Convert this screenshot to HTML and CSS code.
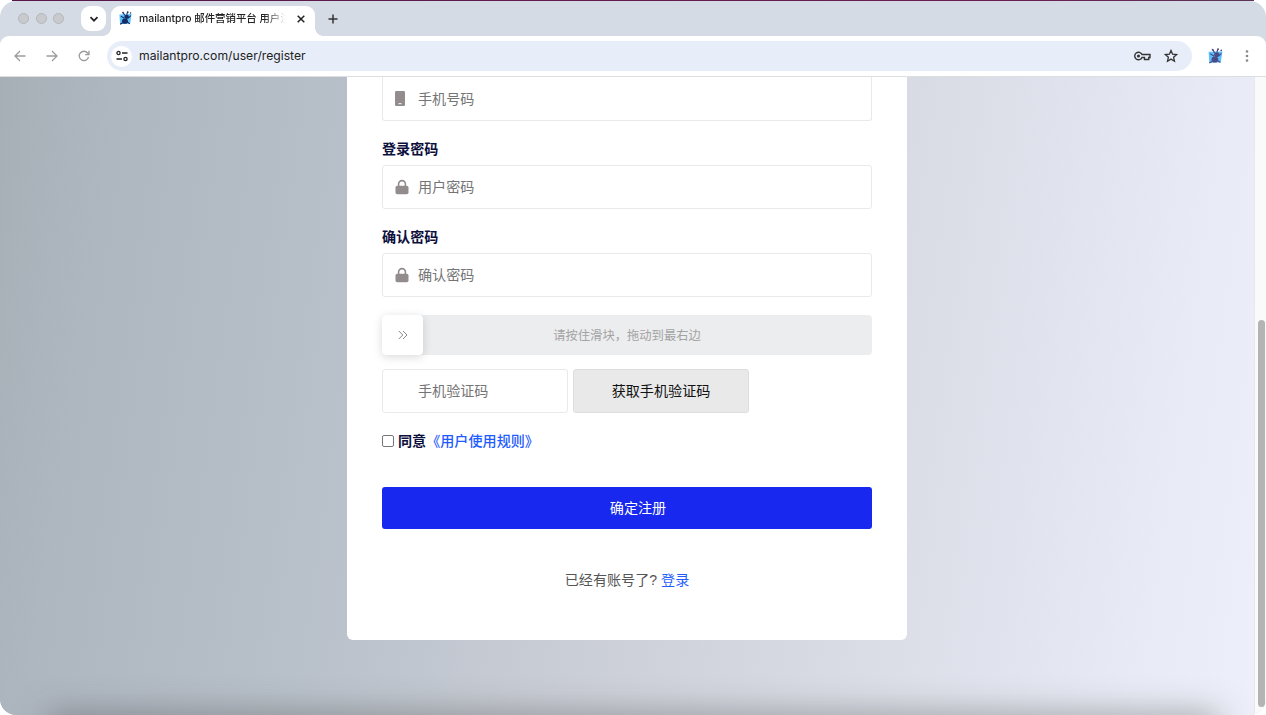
FILE: index.html
```
<!DOCTYPE html>
<html lang="zh-CN">
<head>
  <meta charset="UTF-8">
  <meta name="viewport" content="width=device-width, initial-scale=1.0">
  <title>mailantpro 邮件营销平台 用户注册</title>
  <link rel="stylesheet" href="styles.css">
</head>
<body>
  <svg width="0" height="0" class="sprite">
    <symbol id="ant" viewBox="0 0 16 16">
      <path d="M1.500 3.600 14.500 3.200l-1.500 10.200L2.200 14z" fill="#5cc0fa"/>
      <path d="M5.600 1.800l1.600 2.800M10.200 1l-.9 3M3 5.500l3.800 2.200M11 7.500l2.600-2.500M5 12.500l-2.800 1.700M10 12l2.600 1.600" fill="none" stroke="currentColor" stroke-width="1.100"/>
      <circle cx="5.300" cy="1.700" r=".9" fill="currentColor"/>
      <circle cx="10.400" cy="1.200" r=".9" fill="currentColor"/>
      <circle cx="13.400" cy="2.200" r=".8" fill="currentColor"/>
      <ellipse cx="9.200" cy="6.300" rx="2.500" ry="2.300" fill="currentColor"/>
      <ellipse cx="7.400" cy="10.800" rx="3.200" ry="2.900" fill="currentColor"/>
    </symbol>
    <symbol id="lock" viewBox="0 0 14 16">
      <rect x="0.5" y="6.800" width="13" height="8.400" rx="1.800" fill="#938c8c"/>
      <path d="M3.600 7.500V5a3.400 3.400 0 0 1 6.800 0v2.500" fill="none" stroke="#938c8c" stroke-width="1.600"/>
    </symbol>
  </svg>

  <div class="window">
    <!-- tab strip -->
    <div class="tabs">
      <div class="lights"><i></i><i></i><i></i></div>
      <div class="tab-search">
        <svg width="10" height="10" viewBox="0 0 10 10"><path d="M1.500 3.200 5 6.700l3.500-3.500" fill="none" stroke="#222" stroke-width="1.700"/></svg>
      </div>
      <div class="tab">
        <svg class="favicon" width="15" height="15"><use href="#ant"/></svg>
        <span class="tab-title">mailantpro 邮件营销平台 用户注册</span>
        <svg width="10" height="10" viewBox="0 0 10 10"><path d="M1.700 1.700l6.600 6.600M8.300 1.700l-6.600 6.600" stroke="#222" stroke-width="1.500"/></svg>
      </div>
      <svg class="new-tab" width="10" height="10" viewBox="0 0 10 10"><path d="M5 .5v9M.5 5h9" stroke="#333" stroke-width="1.500"/></svg>
    </div>

    <!-- address bar -->
    <div class="toolbar">
      <div class="nav">
        <svg width="12" height="12" viewBox="0 0 12 12"><path d="M11.500 6H1.300M6 1 1 6l5 5" fill="none" stroke="#9c9c9c" stroke-width="1.300"/></svg>
        <svg width="12" height="12" viewBox="0 0 12 12"><path d="M.5 6h10.200M6 1l5 5-5 5" fill="none" stroke="#9c9c9c" stroke-width="1.300"/></svg>
        <svg width="12" height="12" viewBox="0 0 12 12"><path d="M10.500 7A4.700 4.700 0 1 1 9.600 3L11 4.500M11 .8v3.900H7.100" fill="none" stroke="#9c9c9c" stroke-width="1.300"/></svg>
      </div>
      <div class="omnibox">
        <div class="site-info">
          <svg width="12" height="12" viewBox="0 0 12 12" fill="none" stroke="#222" stroke-width="1.300"><circle cx="2.500" cy="3" r="1.600"/><path d="M6 3h5.500M.5 9h5.500"/><circle cx="9.500" cy="9" r="1.600"/></svg>
        </div>
        <span class="url">mailantpro.com/user/register</span>
        <svg class="key" width="17" height="10" viewBox="0 0 17 10"><path d="M8 3.500A3.800 3.800 0 1 0 8 6.500h2.500V8.500h4.200V6.500h1.300V3.500z" fill="none" stroke="#333" stroke-width="1.400"/><circle cx="4.500" cy="5" r="1.600" fill="#333"/></svg>
        <svg class="star" width="14" height="14" viewBox="0 0 14 14"><path d="M7 1.500l1.600 3.700 4 .4-3 2.700.9 3.900L7 10.100l-3.500 2.100.9-3.900-3-2.700 4-.4z" fill="none" stroke="#333" stroke-width="1.300"/></svg>
      </div>
      <svg class="ext" width="17" height="17"><use href="#ant"/></svg>
      <svg class="menu" width="4" height="14" viewBox="0 0 4 14" fill="#888"><circle cx="2" cy="2.500" r="1.300"/><circle cx="2" cy="7" r="1.300"/><circle cx="2" cy="11.500" r="1.300"/></svg>
    </div>

    <div class="viewport">
      <div class="page">
        <form class="card">
          <div class="field first">
            <svg width="10" height="15" viewBox="0 0 10 15"><rect width="10" height="15" rx="1.300" fill="#938c8c"/><path d="M3.500 12.700h3" stroke="#fff" stroke-width="1"/></svg>
            <input type="text" placeholder="手机号码">
          </div>
          <label class="label">登录密码</label>
          <div class="field">
            <svg width="14" height="16"><use href="#lock"/></svg>
            <input type="password" placeholder="用户密码">
          </div>
          <label class="label">确认密码</label>
          <div class="field">
            <svg width="14" height="16"><use href="#lock"/></svg>
            <input type="password" placeholder="确认密码">
          </div>
          <div class="slider">
            <div class="slider-btn">
              <svg width="10" height="10" viewBox="0 0 10 10"><path d="M.8 1l4 4-4 4M5 1l4 4-4 4" fill="none" stroke="#888" stroke-width="1"/></svg>
            </div>
            <span class="slider-text">请按住滑块，拖动到最右边</span>
          </div>
          <div class="code-row">
            <div class="field code"><input type="text" placeholder="手机验证码"></div>
            <button type="button" class="code-btn">获取手机验证码</button>
          </div>
          <div class="agree">
            <input type="checkbox">
            <span>同意<a href="#">《用户使用规则》</a></span>
          </div>
          <button type="button" class="submit">确定注册</button>
          <p class="login">已经有账号了? <a href="#">登录</a></p>
        </form>
      </div>
      <div class="scrollbar"><div class="thumb"></div></div>
      <div class="shade"></div>
    </div>
  </div>
</body>
</html>
```

FILE: styles.css
```
* {
  box-sizing: border-box;
}

body {
  margin: 0;
  height: 715px;
  padding-top: 1px;
  overflow: hidden;
  background: linear-gradient(to right, #fff 12px, #56184a 12px, #6b1d51 1000px, #5c3558 1254px, #fff 1254px) top / 100% 1px no-repeat #fff;
  font-family: "Liberation Sans", "Noto Sans CJK SC", sans-serif;
  font-size: 14.1px;
}

svg {
  display: block;
  flex-shrink: 0;
}

.sprite {
  position: absolute;
}

a {
  color: #1f5cff;
  text-decoration: none;
}

.window {
  display: flex;
  flex-direction: column;
  height: 714px;
  border-radius: 16px;
  overflow: hidden;
  background: #d5dbe4;
}

/* tab strip */
.tabs {
  display: flex;
  align-items: center;
  height: 35px;
  padding-left: 18px;
}

.lights {
  display: flex;
  gap: 6.5px;
}

.lights i {
  width: 11px;
  height: 11px;
  border-radius: 50%;
  background: #c8cacd;
  border: 1px solid #b4b6b9;
}

.tab-search {
  display: flex;
  align-items: center;
  justify-content: center;
  width: 25px;
  height: 25px;
  margin-left: 17px;
  border-radius: 9px;
  background: #fff;
}

.tab {
  position: relative;
  display: flex;
  align-items: center;
  align-self: flex-end;
  width: 204px;
  height: 30px;
  margin-left: 5px;
  padding: 0 9px 5px 7px;
  border-radius: 9px 9px 0 0;
  background: #fff;
}

.tab::before,
.tab::after {
  content: "";
  position: absolute;
  bottom: 0;
  width: 8px;
  height: 8px;
}

.tab::before {
  left: -8px;
  background: radial-gradient(circle at 0 0, transparent 7.5px, #fff 8px);
}

.tab::after {
  right: -8px;
  background: radial-gradient(circle at 100% 0, transparent 7.5px, #fff 8px);
}

.favicon {
  color: #162a63;
}

.tab-title {
  width: 147px;
  margin: 0 10px 0 6px;
  overflow: hidden;
  white-space: nowrap;
  font: 500 10.4px/16px Inter, "Noto Sans CJK SC", sans-serif;
  color: #222;
  -webkit-mask-image: linear-gradient(to right, #000 125px, transparent 147px);
  mask-image: linear-gradient(to right, #000 125px, transparent 147px);
}

.new-tab {
  margin-left: 13px;
}

/* address bar */
.toolbar {
  display: flex;
  align-items: center;
  height: 41px;
  padding: 0 17px 0 14px;
  background: #fff;
  border-bottom: 1px solid #dcdfe2;
  border-radius: 9px 9px 0 0;
}

.nav {
  display: flex;
  gap: 20px;
}

.omnibox {
  display: flex;
  align-items: center;
  width: 1085px;
  height: 30px;
  margin-left: 17px;
  padding: 0 14px 0 4px;
  border-radius: 15px;
  background: #e8eef9;
}

.site-info {
  display: flex;
  align-items: center;
  justify-content: center;
  width: 21px;
  height: 21px;
  border-radius: 50%;
  background: #fff;
}

.url {
  flex: 1;
  margin-left: 7px;
  font: 12.2px/18px Inter, sans-serif;
  color: #222;
}

.star {
  margin-left: 13px;
}

.ext {
  margin-left: 15px;
  color: #4a4c87;
}

.menu {
  margin-left: auto;
}

/* page */
.viewport {
  position: relative;
  display: flex;
  flex: 1;
  min-height: 0;
}

.page {
  flex: 1;
  overflow: hidden;
  background: linear-gradient(98deg, #a7afb6 0%, #aeb6c0 9%, #b8c0c9 28%, #c8ccd5 46%, #dadde6 71%, #e8ebf5 91%, #edf0fa 100%);
}

.card {
  width: 560px;
  height: 563px;
  margin: 0 auto;
  padding: 0 35px;
  border-radius: 0 0 6px 6px;
  background: #fff;
}

.field {
  display: flex;
  align-items: center;
  height: 44px;
  padding-left: 12px;
  border: 1px solid #e9e9ea;
  border-radius: 3px;
}

.field.first {
  height: 44px;
  border-top: 0;
  border-radius: 0 0 3px 3px;
}

.field input {
  flex: 1;
  min-width: 0;
  height: 100%;
  margin-left: 9px;
  padding: 0;
  border: 0;
  outline: 0;
  background: none;
  font: inherit;
}

.field.first input {
  margin-left: 13px;
}

.field input::placeholder {
  color: #757575;
}

.label {
  display: block;
  padding: 18px 0 6px;
  line-height: 20px;
  font-weight: 700;
  color: #0d0f3d;
}

.slider {
  display: flex;
  align-items: center;
  height: 40px;
  margin-top: 18px;
  border-radius: 4px;
  background: #ecedee;
}

.slider-btn {
  display: flex;
  align-items: center;
  justify-content: center;
  width: 41px;
  height: 40px;
  border-radius: 4px;
  background: #fff;
  box-shadow: 0 2px 10px rgba(0, 0, 0, 0.15);
}

.slider-text {
  flex: 1;
  padding-right: 41px;
  text-align: center;
  font-size: 12.3px;
  color: #a3a3a3;
}

.code-row {
  display: flex;
  gap: 5px;
  margin-top: 14px;
}

.field.code {
  width: 186px;
  padding-left: 26px;
}

.code-btn {
  width: 176px;
  height: 44px;
  padding: 0 0 2px;
  border: 1px solid #dedede;
  border-radius: 3px;
  background: #e9e9e9;
  font: inherit;
  color: #111;
}

.agree {
  display: flex;
  align-items: center;
  height: 20px;
  margin-top: 18px;
  font-weight: 700;
  color: #0d0f3d;
}

.agree span {
  padding-bottom: 2px;
}

.agree input {
  appearance: none;
  width: 12px;
  height: 12px;
  margin: 0 4px 0 0;
  border: 1px solid #777;
  border-radius: 2px;
  background: #fff;
}

.agree a {
  font-weight: 500;
}

.submit {
  display: block;
  width: 100%;
  height: 42px;
  margin-top: 36px;
  padding: 0 0 2px 22px;
  border: 0;
  border-radius: 3px;
  background: #1828ee;
  font: inherit;
  color: #fff;
}

.login {
  margin: 41px 0 0;
  line-height: 20px;
  text-align: center;
  color: #555;
}

.scrollbar {
  width: 12px;
  padding: 243px 2px 0 3px;
  border-left: 1px solid #e8e8e8;
  background: #fafafa;
}

.thumb {
  width: 7px;
  height: 387px;
  border-radius: 4px;
  background: #b4b4b4;
}

/* shadow rising from the bottom edge */
.shade {
  position: absolute;
  left: 50px;
  right: 50px;
  bottom: -22px;
  height: 20px;
  box-shadow: 0 0 32px 2px rgba(70, 70, 65, 0.5);
  pointer-events: none;
}
```
